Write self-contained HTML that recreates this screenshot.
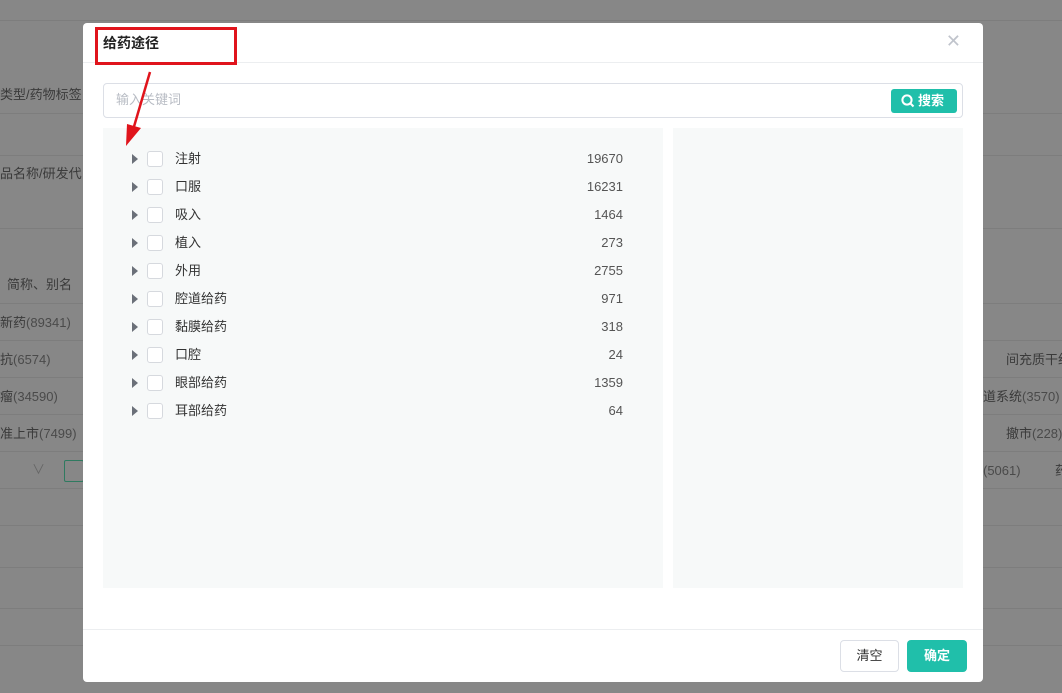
<!DOCTYPE html>
<html><head><meta charset="utf-8"><style>
*{margin:0;padding:0;box-sizing:border-box}
body{width:1062px;height:693px;overflow:hidden;background:#878787;font-family:"Liberation Sans","Noto Sans CJK SC",sans-serif;position:relative;font-size:13px;line-height:20px}
.bg{position:absolute;color:#3a3a3a;font-size:13px;white-space:nowrap;line-height:20px}
.bg .n{color:#4a4a4a}
.hl{position:absolute;left:0;width:1062px;height:1px;background:#7d7d7d}
.modal{position:absolute;left:83px;top:23px;width:900px;height:659px;background:#fff;border-radius:4px}
.title{position:absolute;left:20px;top:10px;font-size:14px;font-weight:bold;color:#222;line-height:20px}
.close{position:absolute;right:22px;top:8px;color:#c0c4cc;font-size:18px;line-height:20px}
.hline{position:absolute;left:0;right:0;top:39px;height:1px;background:#eceef0}
.input{position:absolute;left:20px;top:60px;width:860px;height:35px;border:1px solid #dcdfe6;border-radius:4px}
.input span{position:absolute;left:12px;top:6px;color:#b8bcc4;font-size:13px;line-height:20px}
.sbtn{position:absolute;right:5px;top:5px;width:66px;height:24px;background:#20bfaa;border-radius:3px;color:#fff;font-size:13px;font-weight:bold;line-height:24px;padding-left:27px}
.lp{position:absolute;left:20px;top:105px;width:560px;height:460px;background:#f7f9f9}
.rp{position:absolute;left:590px;top:105px;width:290px;height:460px;background:#f7f9f9}
.row{position:absolute;left:0;width:560px;height:20px}
.tri{position:absolute;left:29px;top:5px;width:0;height:0;border-left:6px solid #6b7079;border-top:5px solid transparent;border-bottom:5px solid transparent}
.cb{position:absolute;left:44px;top:2px;width:16px;height:16px;border:1px solid #d6d9de;border-radius:3px;background:#fff}
.lb{position:absolute;left:72px;top:0;color:#333;font-size:13px;line-height:20px}
.num{position:absolute;right:40px;top:0;color:#555;font-size:13px;line-height:20px}
.fline{position:absolute;left:0;right:0;top:606px;height:1px;background:#eceef0}
.b1{position:absolute;left:757px;top:617px;width:59px;height:32px;border:1px solid #dcdfe6;border-radius:4px;text-align:center;line-height:30px;color:#333;font-size:13px}
.b2{position:absolute;left:824px;top:617px;width:60px;height:32px;background:#20bfaa;border-radius:4px;text-align:center;line-height:32px;color:#fff;font-size:13px;font-weight:bold}
.red{position:absolute;left:95px;top:27px;width:142px;height:38px;border:3px solid #e0141c}
</style></head><body>
<div class="hl" style="top:20px"></div>
<div class="hl" style="top:113px"></div>
<div class="hl" style="top:155px"></div>
<div class="hl" style="top:228px"></div>
<div class="hl" style="top:303px"></div>
<div class="hl" style="top:340px"></div>
<div class="hl" style="top:377px"></div>
<div class="hl" style="top:414px"></div>
<div class="hl" style="top:451px"></div>
<div class="hl" style="top:488px"></div>
<div class="hl" style="top:525px"></div>
<div class="hl" style="top:567px"></div>
<div class="hl" style="top:608px"></div>
<div class="hl" style="top:645px"></div>
<div class="bg" style="left:0;top:85px">类型/药物标签</div>
<div class="bg" style="left:0;top:164px">品名称/研发代</div>
<div class="bg" style="left:7px;top:275px">简称、别名</div>
<div class="bg" style="left:0;top:313px">新药<span class="n">(89341)</span></div>
<div class="bg" style="left:0;top:350px">抗<span class="n">(6574)</span></div>
<div class="bg" style="left:0;top:387px">瘤<span class="n">(34590)</span></div>
<div class="bg" style="left:0;top:424px">准上市<span class="n">(7499)</span></div>
<div class="bg" style="left:32px;top:460px;color:#666">∨</div>
<div style="position:absolute;left:64px;top:460px;width:20px;height:22px;border:1px solid #2f7a60;border-radius:2px"></div>
<div class="bg" style="left:1006px;top:350px">间充质干细</div>
<div class="bg" style="left:983px;top:387px">道系统<span class="n">(3570)</span></div>
<div class="bg" style="left:1006px;top:424px">撤市<span class="n">(228)</span></div>
<div class="bg" style="left:983px;top:461px"><span class="n">(5061)</span></div>
<div class="bg" style="left:1055px;top:461px">药</div>
<div class="modal">
<div class="title">给药途径</div>
<div class="close">✕</div>
<div class="hline"></div>
<div class="input"><span>输入关键词</span>
<div class="sbtn"><svg style="position:absolute;left:10px;top:5px" width="14" height="14" viewBox="0 0 14 14"><circle cx="6" cy="6" r="4.6" fill="none" stroke="#fff" stroke-width="2"/><path d="M9.5 9.5L12.5 12.5" stroke="#fff" stroke-width="2"/></svg>搜索</div></div>
<div class="lp">
<div class="row" style="top:21px"><i class="tri"></i><i class="cb"></i><span class="lb">注射</span><span class="num">19670</span></div>
<div class="row" style="top:49px"><i class="tri"></i><i class="cb"></i><span class="lb">口服</span><span class="num">16231</span></div>
<div class="row" style="top:77px"><i class="tri"></i><i class="cb"></i><span class="lb">吸入</span><span class="num">1464</span></div>
<div class="row" style="top:105px"><i class="tri"></i><i class="cb"></i><span class="lb">植入</span><span class="num">273</span></div>
<div class="row" style="top:133px"><i class="tri"></i><i class="cb"></i><span class="lb">外用</span><span class="num">2755</span></div>
<div class="row" style="top:161px"><i class="tri"></i><i class="cb"></i><span class="lb">腔道给药</span><span class="num">971</span></div>
<div class="row" style="top:189px"><i class="tri"></i><i class="cb"></i><span class="lb">黏膜给药</span><span class="num">318</span></div>
<div class="row" style="top:217px"><i class="tri"></i><i class="cb"></i><span class="lb">口腔</span><span class="num">24</span></div>
<div class="row" style="top:245px"><i class="tri"></i><i class="cb"></i><span class="lb">眼部给药</span><span class="num">1359</span></div>
<div class="row" style="top:273px"><i class="tri"></i><i class="cb"></i><span class="lb">耳部给药</span><span class="num">64</span></div>
</div>
<div class="rp"></div>
<div class="fline"></div>
<div class="b1">清空</div>
<div class="b2">确定</div>
</div>
<div class="red"></div>
<svg style="position:absolute;left:0;top:0" width="1062" height="693"><path d="M150 72L133 130" stroke="#e0141c" stroke-width="2.5"/><path d="M126 146L127 124L141 128Z" fill="#e0141c"/></svg>
</body></html>
